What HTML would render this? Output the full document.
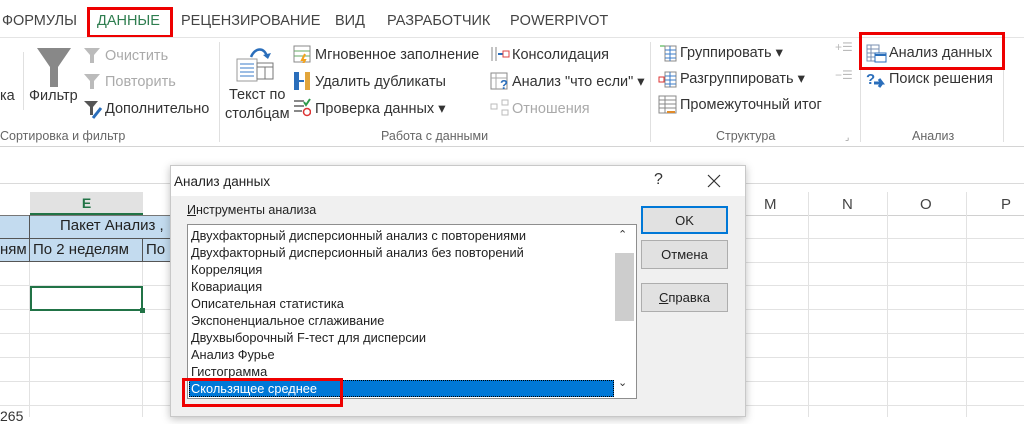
<!DOCTYPE html>
<html><head><meta charset="utf-8"><style>
*{margin:0;padding:0;box-sizing:border-box}
body{width:1024px;height:417px;overflow:hidden;background:#fff;font-family:"Liberation Sans","Noto Sans CJK SC",sans-serif;color:#333;position:relative}
.a{position:absolute;white-space:nowrap}
.t{font-size:14.5px;color:#444}
.r{font-size:14.5px;color:#333}
.g{font-size:12.5px;color:#666}
.d{color:#aaa}
.hl{position:absolute;height:1px;background:#dadada}
.vl{position:absolute;width:1px;background:#dadada}
.li{position:absolute;left:191px;font-size:12.8px;color:#222}
.btn{position:absolute;left:641px;width:87px;background:#e1e1e1;border:1px solid #adadad;font-size:13px;text-align:center;color:#222}
</style></head><body>
<div class="a t" style="left:2px;top:13px">ФОРМУЛЫ</div>
<div class="a t" style="left:97px;top:13px;color:#2e7d4f">ДАННЫЕ</div>
<div class="a" style="left:87px;top:7px;width:86px;height:31px;border:3px solid #e00"></div>
<div class="a t" style="left:181px;top:13px">РЕЦЕНЗИРОВАНИЕ</div>
<div class="a t" style="left:335px;top:13px">ВИД</div>
<div class="a t" style="left:387px;top:13px">РАЗРАБОТЧИК</div>
<div class="a t" style="left:510px;top:13px">POWERPIVOT</div>
<div class="hl" style="left:0;top:37px;width:1024px;background:#e4e4e4"></div>
<div class="vl" style="left:23px;top:52px;height:58px;background:#e0e0e0"></div>
<div class="vl" style="left:219px;top:42px;height:100px;background:#e0e0e0"></div>
<div class="vl" style="left:650px;top:42px;height:100px;background:#e0e0e0"></div>
<div class="vl" style="left:860px;top:42px;height:100px;background:#e0e0e0"></div>
<div class="vl" style="left:1003px;top:42px;height:100px;background:#e0e0e0"></div>
<div class="a r" style="left:0;top:88px">ка</div>
<svg class="a" style="left:36px;top:47px" width="36" height="42"><path d="M1 1h34L22 20v20h-8V20z" fill="#888"/></svg>
<div class="a r" style="left:29px;top:88px">Фильтр</div>
<svg class="a" style="left:83px;top:47px" width="20" height="18"><path d="M1 1h16l-6 7v8h-4V8z" fill="#bbb"/></svg>
<div class="a r d" style="left:105px;top:48px">Очистить</div>
<svg class="a" style="left:83px;top:73px" width="20" height="18"><path d="M1 1h16l-6 7v8h-4V8z" fill="#bbb"/></svg>
<div class="a r d" style="left:105px;top:74px">Повторить</div>
<svg class="a" style="left:83px;top:100px" width="20" height="20"><path d="M1 1h14l-5 6v8h-3V7z" fill="#555"/><path d="M10 18l8-10" stroke="#2a6ebb" stroke-width="3"/></svg>
<div class="a r" style="left:105px;top:101px">Дополнительно</div>
<div class="a g" style="left:0;top:129px">Сортировка и фильтр</div>
<svg class="a" style="left:235px;top:45px" width="40" height="38"><rect x="2" y="14" width="20" height="22" fill="#fff" stroke="#999"/><path d="M5 19h14M5 23h14M5 27h14M5 31h14" stroke="#3a7bc8"/><rect x="22" y="18" width="16" height="16" fill="#fff" stroke="#777"/><path d="M22 22h16M30 22v12" stroke="#777"/><path d="M16 12c4-10 14-10 16 0" fill="none" stroke="#2a6ebb" stroke-width="2.5"/><path d="M28 10l5 4 3-6z" fill="#2a6ebb"/></svg>
<div class="a r" style="left:229px;top:87px">Текст по</div>
<div class="a r" style="left:225px;top:106px">столбцам</div>
<svg class="a" style="left:293px;top:45px" width="18" height="18"><rect x="1" y="1" width="16" height="16" fill="#fff" stroke="#888"/><path d="M1 6h16M1 11h16" stroke="#6a6"/><path d="M12 9l-3 6h3l-2 4" stroke="#f2a21c" stroke-width="2" fill="none"/></svg>
<div class="a r" style="left:315px;top:47px">Мгновенное заполнение</div>
<svg class="a" style="left:293px;top:71px" width="18" height="20"><rect x="1" y="1" width="5" height="18" fill="#2a6ebb"/><rect x="12" y="1" width="5" height="18" fill="#e2a53a"/><path d="M6 10h5" stroke="#2a6ebb" stroke-width="2"/></svg>
<div class="a r" style="left:315px;top:74px">Удалить дубликаты</div>
<svg class="a" style="left:293px;top:97px" width="18" height="20"><path d="M1 4h10M1 9h10M1 14h8" stroke="#888" stroke-width="2"/><path d="M11 5l2 3 4-6" stroke="#2e9a4a" stroke-width="2" fill="none"/><circle cx="14" cy="15" r="3.5" fill="none" stroke="#d33" stroke-width="1.5"/></svg>
<div class="a r" style="left:315px;top:101px">Проверка данных ▾</div>
<div class="a g" style="left:381px;top:129px">Работа с данными</div>
<svg class="a" style="left:490px;top:45px" width="20" height="18"><path d="M2 2v14M6 2v14" stroke="#888"/><path d="M8 9h5" stroke="#2a6ebb" stroke-width="2"/><rect x="13" y="6" width="6" height="6" fill="none" stroke="#d44"/></svg>
<div class="a r" style="left:512px;top:47px">Консолидация</div>
<svg class="a" style="left:490px;top:72px" width="20" height="20"><rect x="1" y="1" width="16" height="16" fill="#fff" stroke="#888"/><path d="M1 6h16M6 1v16" stroke="#aaa"/><text x="10" y="17" font-size="13" fill="#2a6ebb" font-family="Liberation Sans" font-weight="bold">?</text></svg>
<div class="a r" style="left:512px;top:74px">Анализ "что если" ▾</div>
<svg class="a" style="left:490px;top:99px" width="20" height="18"><rect x="1" y="5" width="6" height="5" fill="none" stroke="#bbb"/><rect x="12" y="1" width="6" height="5" fill="none" stroke="#bbb"/><rect x="12" y="11" width="6" height="5" fill="none" stroke="#bbb"/></svg>
<div class="a r d" style="left:512px;top:101px">Отношения</div>
<svg class="a" style="left:658px;top:43px" width="20" height="20"><path d="M2 3h6" stroke="#3a3"/><rect x="7" y="3" width="11" height="15" fill="#fff" stroke="#888"/><path d="M7 7h11M7 11h11M7 15h11M12 3v15" stroke="#3a7bc8"/></svg>
<div class="a r" style="left:680px;top:45px">Группировать ▾</div>
<svg class="a" style="left:658px;top:69px" width="20" height="20"><rect x="1" y="8" width="5" height="5" fill="none" stroke="#d33"/><rect x="7" y="3" width="11" height="15" fill="#fff" stroke="#888"/><path d="M7 7h11M7 11h11M7 15h11M12 3v15" stroke="#3a7bc8"/></svg>
<div class="a r" style="left:680px;top:71px">Разгруппировать ▾</div>
<svg class="a" style="left:658px;top:95px" width="20" height="20"><rect x="1" y="1" width="17" height="17" fill="#fff" stroke="#888"/><path d="M1 5h17M1 9h17M1 13h17M7 1v17" stroke="#888"/><path d="M9 17h8" stroke="#e08a2a" stroke-width="2"/></svg>
<div class="a r" style="left:680px;top:97px">Промежуточный итог</div>
<div class="a g" style="left:716px;top:129px">Структура</div>
<div class="a" style="left:845px;top:132px;font-size:9px;color:#888">⌟</div>
<div class="a" style="left:835px;top:40px;font-size:12px;color:#bbb">+☰</div>
<div class="a" style="left:835px;top:68px;font-size:12px;color:#bbb">−☰</div>
<svg class="a" style="left:866px;top:44px" width="22" height="20"><rect x="1" y="1" width="12" height="16" fill="#fff" stroke="#7a8fb0"/><path d="M1 5h12M1 9h12M1 13h12M5 1v16" stroke="#7a8fb0"/><rect x="9" y="9" width="11" height="9" fill="#fff" stroke="#2a6ebb"/><path d="M9 11h11" stroke="#2a6ebb" stroke-width="2"/></svg>
<div class="a r" style="left:889px;top:45px">Анализ данных</div>
<div class="a" style="left:859px;top:32px;width:146px;height:38px;border:3px solid #e00"></div>
<svg class="a" style="left:866px;top:70px" width="22" height="20"><text x="0" y="14" font-size="15" font-weight="bold" fill="#2a6ebb" font-family="Liberation Sans">?</text><path d="M8 13h8l-3-4M16 13l-3 4" stroke="#2a6ebb" stroke-width="3" fill="none"/></svg>
<div class="a r" style="left:889px;top:71px">Поиск решения</div>
<div class="a g" style="left:912px;top:129px">Анализ</div>
<div class="hl" style="left:0;top:146px;width:1024px;background:#d4d4d4"></div>
<div class="hl" style="left:0;top:183px;width:1024px"></div>
<div class="a" style="left:30px;top:192px;width:113px;height:23px;background:#e2e2e2;border-bottom:2px solid #217346;color:#217346;font-weight:bold;font-size:14px;text-align:center;line-height:22px">E</div>
<div class="hl" style="left:0;top:215px;width:1024px;background:#c6c6c6"></div>
<div class="a" style="left:0;top:215px;width:172px;height:47px;background:#c3dbef"></div>
<div class="a" style="left:0;top:215px;width:172px;height:24px;border-top:1px solid #777;border-bottom:1px solid #555"></div>
<div class="vl" style="left:29px;top:215px;height:47px;background:#555"></div>
<div class="vl" style="left:142px;top:238px;height:24px;background:#555"></div>
<div class="a" style="left:0;top:261px;width:172px;height:1px;background:#555"></div>
<div class="a" style="left:60px;top:217px;font-size:15px;color:#222">Пакет Анализ ,</div>
<div class="a" style="left:0;top:241px;font-size:15px;color:#222">ням</div>
<div class="a" style="left:33px;top:241px;font-size:15px;color:#222">По 2 неделям</div>
<div class="a" style="left:146px;top:241px;font-size:15px;color:#222">По</div>
<div class="hl" style="left:0;top:285px;width:1024px;background:#e2e2e2"></div>
<div class="hl" style="left:0;top:309px;width:1024px;background:#e2e2e2"></div>
<div class="hl" style="left:0;top:333px;width:1024px;background:#e2e2e2"></div>
<div class="hl" style="left:0;top:357px;width:1024px;background:#e2e2e2"></div>
<div class="hl" style="left:0;top:381px;width:1024px;background:#e2e2e2"></div>
<div class="hl" style="left:0;top:405px;width:1024px;background:#e2e2e2"></div>
<div class="hl" style="left:745px;top:215px;width:279px;background:#d0d0d0"></div>
<div class="hl" style="left:745px;top:238px;width:279px;background:#e2e2e2"></div>
<div class="hl" style="left:745px;top:262px;width:279px;background:#e2e2e2"></div>
<div class="vl" style="left:29px;top:262px;height:155px;background:#e2e2e2"></div>
<div class="vl" style="left:142px;top:262px;height:155px;background:#e2e2e2"></div>
<div class="vl" style="left:808px;top:192px;height:225px;background:#e2e2e2"></div>
<div class="vl" style="left:887px;top:192px;height:225px;background:#e2e2e2"></div>
<div class="vl" style="left:966px;top:192px;height:225px;background:#e2e2e2"></div>
<div class="a" style="left:764px;top:196px;font-size:15px;color:#444">M</div>
<div class="a" style="left:842px;top:196px;font-size:15px;color:#444">N</div>
<div class="a" style="left:920px;top:196px;font-size:15px;color:#444">O</div>
<div class="a" style="left:1001px;top:196px;font-size:15px;color:#444">P</div>
<div class="a" style="left:30px;top:286px;width:113px;height:25px;border:2px solid #217346"></div>
<div class="a" style="left:140px;top:308px;width:5px;height:5px;background:#217346"></div>
<div class="a" style="left:0;top:408px;font-size:14px;color:#333">265</div>
<div class="a" style="left:170px;top:165px;width:576px;height:252px;background:#f0f0f0;border:1px solid #c8c8c8;box-shadow:0 2px 8px rgba(0,0,0,.25)"></div>
<div class="a" style="left:171px;top:166px;width:574px;height:30px;background:#fff"></div>
<div class="a" style="left:174px;top:174px;font-size:13.5px;color:#222">Анализ данных</div>
<div class="a" style="left:654px;top:171px;font-size:16px;color:#333">?</div>
<svg class="a" style="left:707px;top:174px" width="14" height="14"><path d="M1 1l12 12M13 1L1 13" stroke="#333" stroke-width="1.2"/></svg>
<div class="a" style="left:187px;top:203px;font-size:12.5px;color:#222"><u>И</u>нструменты анализа</div>
<div class="a" style="left:187px;top:224px;width:450px;height:175px;background:#fff;border:1px solid #8e8e8e"></div>
<div class="a" style="left:615px;top:253px;width:19px;height:68px;background:#cdcdcd"></div>
<div class="a" style="left:618px;top:228px;font-size:11px;color:#333">⌃</div>
<div class="a" style="left:618px;top:376px;font-size:11px;color:#333">⌄</div>
<div class="li" style="top:228px">Двухфакторный дисперсионный анализ с повторениями</div>
<div class="li" style="top:245px">Двухфакторный дисперсионный анализ без повторений</div>
<div class="li" style="top:262px">Корреляция</div>
<div class="li" style="top:279px">Ковариация</div>
<div class="li" style="top:296px">Описательная статистика</div>
<div class="li" style="top:313px">Экспоненциальное сглаживание</div>
<div class="li" style="top:330px">Двухвыборочный F-тест для дисперсии</div>
<div class="li" style="top:347px">Анализ Фурье</div>
<div class="li" style="top:364px">Гистограмма</div>
<div class="a" style="left:189px;top:380px;width:425px;height:17px;background:#0078d7;border:1px dotted #000"></div>
<div class="li" style="top:381px;color:#fff">Скользящее среднее</div>
<div class="a" style="left:182px;top:378px;width:161px;height:29px;border:3px solid #e00"></div>
<div class="btn" style="top:206px;height:28px;line-height:25px;border:2px solid #0078d7">OK</div>
<div class="btn" style="top:240px;height:29px;line-height:27px">Отмена</div>
<div class="btn" style="top:283px;height:29px;line-height:27px"><u>С</u>правка</div>
</body></html>
